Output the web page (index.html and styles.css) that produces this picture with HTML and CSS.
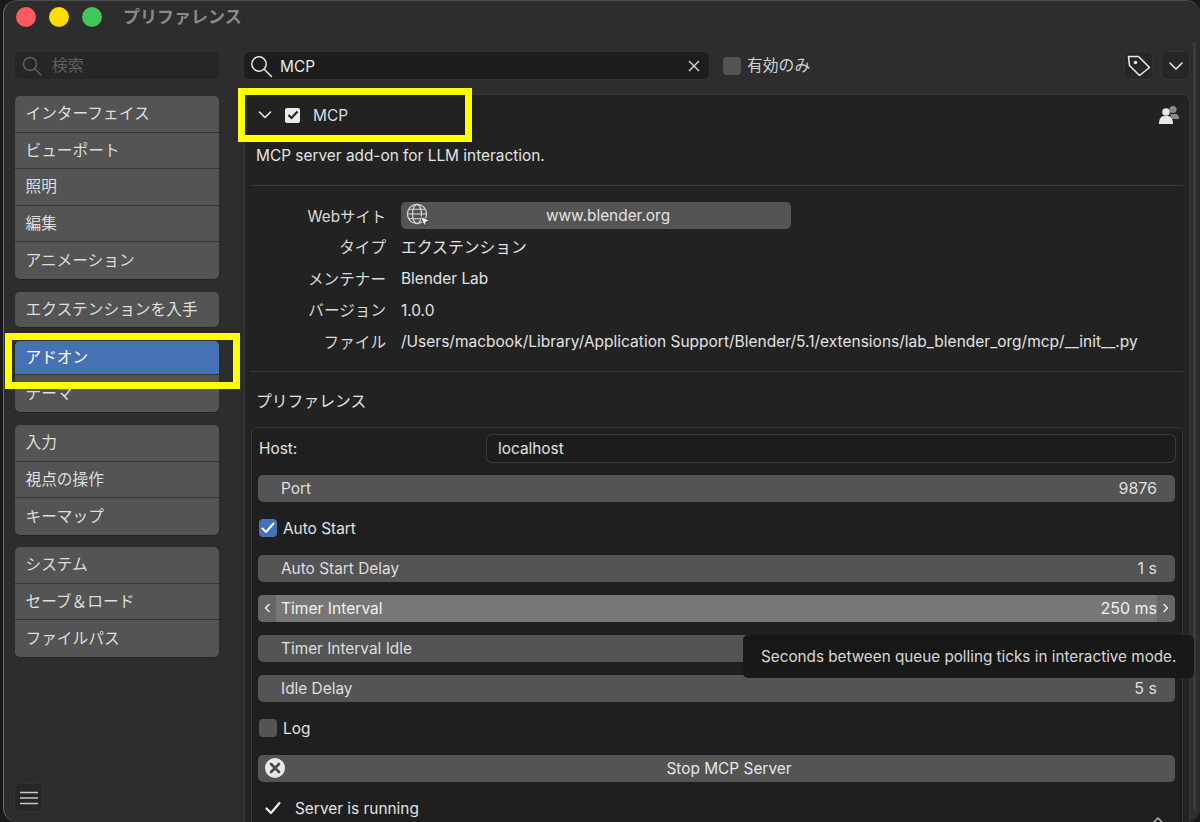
FILE: index.html
```html
<!DOCTYPE html>
<html lang="ja">
<head>
<meta charset="utf-8">
<title>プリファレンス</title>
<link rel="stylesheet" href="styles.css">
</head>
<body>
<div class="window">
  <header class="titlebar">
    <span class="light red"></span><span class="light yellow"></span><span class="light green"></span>
    <span class="title">プリファレンス</span>
  </header>
  <div class="content">
    <aside class="sidebar">
      <div class="side-search">
        <svg class="search-icon" width="22" height="22" viewBox="0 0 22 22"><circle cx="9" cy="9" r="6.5"/><path d="M13.8 13.8 20 20"/></svg>
        <span class="jp">検索</span>
      </div>
      <nav class="group first"><a>インターフェイス</a><a>ビューポート</a><a>照明</a><a>編集</a><a>アニメーション</a></nav>
      <nav class="group single"><a>エクステンションを入手</a></nav>
      <nav class="group"><a class="active">アドオン</a><a>テーマ</a></nav>
      <nav class="group"><a>入力</a><a>視点の操作</a><a>キーマップ</a></nav>
      <nav class="group last"><a>システム</a><a>セーブ＆ロード</a><a>ファイルパス</a></nav>
      <div class="side-spacer"></div>
      <div class="menu-btn"><svg width="18" height="16" viewBox="0 0 18 16"><path d="M0 2.500h18M0 8h18M0 13.500h18"/></svg></div>
    </aside>
    <main class="main">
      <div class="toolbar">
        <div class="main-search">
          <svg class="search-icon bright" width="24" height="24" viewBox="0 0 24 24"><circle cx="10" cy="10" r="7.2"/><path d="M15.2 15.2 22.5 22.5"/></svg>
          <span class="grow search-text">MCP</span>
          <svg class="clear" width="14" height="14" viewBox="0 0 14 14"><path d="M2 2l10 10M12 2 2 12"/></svg>
        </div>
        <span class="check-off small"></span>
        <span class="enabled jp">有効のみ</span>
        <span class="grow"></span>
        <div class="tool-btn"><svg width="24" height="24" viewBox="0 0 24 24"><path class="stroke" d="M1.500 2.500h10l11 11-10 8-10-10z"/><circle cx="8.500" cy="8.500" r="1.800" fill="#e6e6e6"/></svg></div>
        <div class="tool-btn"><svg width="16" height="10" viewBox="0 0 16 10"><path class="stroke" d="M2 2l6 6 6-6"/></svg></div>
      </div>
      <section class="panel">
        <div class="addon-head">
          <svg class="chev" width="14" height="10" viewBox="0 0 14 10"><path class="stroke" d="M1.500 2 7 7.500 12.500 2"/></svg>
          <span class="addon-check"><svg width="12" height="10" viewBox="0 0 12 10"><path d="M1.500 5 4.500 8 10.500 1.500"/></svg></span>
          <span class="addon-name">MCP</span>
          <span class="grow"></span>
          <svg class="users" width="22" height="22" viewBox="0 0 22 22"><circle cx="15" cy="5.500" r="3.600" fill="#8a8a8a"/><path d="M12 10h6c2 0 3 2 3 5h-7z" fill="#8a8a8a"/><circle cx="8" cy="8" r="3.800" fill="#e8e8e8"/><path d="M1 20c0-5 2-8 5-8h4c3 0 5 3 5 8z" fill="#e8e8e8"/></svg>
        </div>
        <p class="desc">MCP server add-on for LLM interaction.</p>
        <hr class="rule">
        <div class="info">
          <div class="info-row web"><label class="site">Webサイト</label>
            <div class="url"><svg width="26" height="26" viewBox="0 0 26 26"><circle cx="11" cy="11" r="9.600"/><ellipse cx="11" cy="11" rx="4.500" ry="9.600"/><path d="M1.500 11h19M2.800 6.200h16.400M2.800 15.800h16.400"/><path class="cursor" d="M14.500 13.500l9 4-3.600 1.500-1.400 4z"/></svg><span>www.blender.org</span></div>
          </div>
          <div class="info-row"><label>タイプ</label><span class="jp">エクステンション</span></div>
          <div class="info-row"><label>メンテナー</label><span>Blender Lab</span></div>
          <div class="info-row"><label>バージョン</label><span>1.0.0</span></div>
          <div class="info-row"><label>ファイル</label><span class="path">/Users/macbook/Library/Application Support/Blender/5.1/extensions/lab_blender_org/mcp/__init__.py</span></div>
        </div>
        <hr class="rule second">
        <h2 class="prefs-title">プリファレンス</h2>
        <div class="prefs">
          <div class="row host"><span class="host-label">Host:</span><div class="host-input">localhost</div></div>
          <div class="row"><div class="num"><span>Port</span><span class="val">9876</span></div></div>
          <div class="row"><span class="check-on"><svg width="14" height="12" viewBox="0 0 14 12"><path d="M1.500 6.500 5 10l7.500-8.500"/></svg></span><span class="check-label">Auto Start</span></div>
          <div class="row"><div class="num"><span>Auto Start Delay</span><span class="val">1 s</span></div></div>
          <div class="row"><div class="num hover">
            <span class="arrow left"><svg width="8" height="10" viewBox="0 0 8 10"><path class="stroke" d="M6 1.500 2.500 5 6 8.500"/></svg></span>
            <span>Timer Interval</span><span class="val">250 ms</span>
            <span class="arrow right"><svg width="8" height="10" viewBox="0 0 8 10"><path class="stroke" d="M2 1.500 5.500 5 2 8.500"/></svg></span>
          </div></div>
          <div class="row"><div class="num"><span>Timer Interval Idle</span><span></span></div></div>
          <div class="row"><div class="num"><span>Idle Delay</span><span class="val">5 s</span></div></div>
          <div class="row"><span class="check-off"></span><span class="check-label">Log</span></div>
          <div class="row"><div class="op"><svg width="20" height="20" viewBox="0 0 20 20"><circle cx="10" cy="10" r="10" fill="#e8e8e8"/><path d="M6 6l8 8M14 6l-8 8" stroke="#4a4a4a" stroke-width="2.600" stroke-linecap="round"/></svg><span>Stop MCP Server</span></div></div>
          <div class="row status"><svg width="16" height="14" viewBox="0 0 16 14"><path d="M1.500 7.500 6 12 14.500 2"/></svg><span>Server is running</span></div>
        </div>
      </section>
    </main>
    <div class="scrollbar"></div>
  </div>
</div>
<div class="mark mark-head"></div>
<div class="mark mark-nav"></div>
<div class="tooltip">Seconds between queue polling ticks in interactive mode.</div>
<svg class="collapse" width="16" height="10" viewBox="0 0 16 10"><path d="M2 8l6-6 6 6"/></svg>
</body>
</html>
```
FILE: styles.css
```css
* { box-sizing: border-box; }
html, body { margin: 0; height: 822px; overflow: hidden; background: #1a1a1a; }
body {
  position: relative;
  padding-left: 3px;
  font-family: Inter, "Noto Sans CJK JP", sans-serif;
  font-size: 15.4px;
  color: #e2e2e2;
}
svg { display: block; flex: none; }
.stroke { fill: none; stroke: #e6e6e6; stroke-width: 1.600; stroke-linecap: round; stroke-linejoin: round; }
.grow { flex: 1; }
.jp { font-size: 15.800px; padding-bottom: 2px; }

.window {
  width: 1197px;
  height: 822px;
  background: #2d2d2d;
  border-left: 1px solid #6a6a6a;
  border-top: 1px solid #4a4a4a;
  border-radius: 14px;
  display: flex;
  flex-direction: column;
  overflow: hidden;
}

.titlebar { height: 51px; flex: none; display: flex; align-items: flex-start; padding: 6px 0 0 12px; gap: 13px; }
.light { width: 20px; height: 20px; border-radius: 50%; }
.red { background: #ff5a5f; }
.yellow { background: #fedd00; }
.green { background: #3fc65c; }
.title { margin-left: 8px; font-size: 17px; font-weight: 700; line-height: 20px; color: #8a8a8a; }

.content { flex: 1; min-height: 0; display: flex; }

.sidebar { width: 240px; flex: none; padding-left: 11px; display: flex; flex-direction: column; }
.side-search {
  width: 204px; height: 27px; flex: none;
  background: #262626; border-radius: 5px;
  display: flex; align-items: center; gap: 9px; padding-left: 6px;
  color: #5f5f5f;
}
.search-icon { fill: none; stroke: #5f5f5f; stroke-width: 1.500; stroke-linecap: round; }
.search-icon.bright { stroke: #e8e8e8; }

.group {
  width: 204px; flex: none; margin-top: 13.500px;
  background: #545454; border-radius: 5px; overflow: hidden;
  box-shadow: 0 1px 0 #222;
  display: flex; flex-direction: column;
}
.group.first { margin-top: 17px; }
.group.last { margin-top: 12.500px; }
.group a {
  height: 36.500px; flex: none; padding: 0 0 2px 10.500px;
  display: flex; align-items: center;
  font-size: 15.700px; color: #dedede;
  border-bottom: 1px solid #363636;
}
.group a:last-child { border-bottom: 0; }
.group.single a { height: 35px; }
.group a.active { background: #4671b5; color: #fff; height: 34.500px; }
.side-spacer { flex: 1; }
.menu-btn {
  width: 27px; height: 27px; margin: 0 0 11px 0; flex: none;
  background: #262626; border-radius: 5px;
  box-shadow: 0 0 0 1px #333;
  display: flex; align-items: center; justify-content: center;
}
.menu-btn svg { fill: none; stroke: #c8c8c8; stroke-width: 1.300; }

.main { width: 945px; flex: none; display: flex; flex-direction: column; }
.toolbar { height: 27px; flex: none; display: flex; align-items: center; }
.main-search {
  width: 465px; height: 27px; background: #1d1d1d; border-radius: 5px;
  display: flex; align-items: center; padding: 0 8px 0 5px; gap: 7px;
  color: #e8e8e8; box-shadow: 0 0 0 0.500px #383838;
}
.search-text { padding-top: 1px; }
.clear { fill: none; stroke: #d0d0d0; stroke-width: 1.500; }
.check-off {
  width: 20px; height: 20px; flex: none; background: #545454; border-radius: 4px;
}
.check-off.small { width: 18px; height: 18px; margin-left: 14px; }
.enabled { margin-left: 6px; color: #d2d2d2; }
.tool-btn {
  width: 27px; height: 27px; margin-left: 10px; flex: none;
  background: #262626; border-radius: 5px;
  box-shadow: 0 0 0 1px #333;
  display: flex; align-items: center; justify-content: center;
}

.panel {
  flex: 1; min-height: 0; margin: 16px 0 0 1px; padding: 0 6px 0 5px;
  background: #222; border-radius: 6px 6px 0 0;
  box-shadow: 0 0 0 1px #383838;
  overflow: hidden;
}
.addon-head { height: 40px; display: flex; align-items: center; padding: 0 3px 0 8px; }
.chev { margin-right: 13px; }
.addon-check {
  width: 15px; height: 15px; background: #ececec; border-radius: 2px; margin-right: 13px;
  display: flex; align-items: center; justify-content: center;
}
.addon-check svg { fill: none; stroke: #222; stroke-width: 2.200; }
.addon-name { color: #dedede; }
.desc { margin: 0; height: 50px; padding: 11px 0 0 6px; line-height: 20px; color: #e2e2e2; }
.rule { margin: 0; border: 0; border-top: 1px solid #383838; }

.info { padding-top: 14.500px; height: 185px; }
.info-row { height: 31.500px; display: flex; align-items: center; gap: 15px; }
.info-row.web { height: 30px; margin-bottom: 1px; }
.info-row label { width: 136px; flex: none; text-align: right; color: #dadada; font-size: 15.600px; padding-bottom: 2px; }
.info-row label.site { font-size: 15.300px; }
.path { font-size: 15.500px; }
.url {
  width: 390px; height: 27px; background: #545454; border-radius: 5px;
  display: flex; align-items: center; padding-left: 5px;
}
.url svg { fill: none; stroke: #dcdcdc; stroke-width: 1.100; }
.url svg .cursor { fill: #f2f2f2; stroke: #222; stroke-width: .6; }
.url span { flex: 1; text-align: center; padding-right: 7px; }

.prefs-title { margin: 0; height: 55px; padding: 20px 0 0 6px; font-size: 15.800px; font-weight: 400; line-height: 20px; color: #e2e2e2; }
.prefs {
  width: 932px; padding: 0 7px 0 6px; height: 420px;
  background: #1f1f1f; border: 1px solid #383838; border-radius: 6px 6px 0 0;
  margin-left: 1px;
}
.row { height: 40px; display: flex; align-items: center; }
.host-label { width: 228px; margin-left: 1px; flex: none; }
.host-input {
  flex: 1; height: 27px; padding-left: 11px; line-height: 27px;
  background: #1d1d1d; border-radius: 5px; box-shadow: 0 0 0 1px #3c3c3c;
}
.num {
  flex: 1; height: 27px; background: #545454; border-radius: 5px;
  display: flex; justify-content: space-between; align-items: center;
  padding: 0 18px 0 23px; color: #dedede; position: relative;
}
.num .val { font-size: 16px; }
.num.hover { background: #777; color: #f0f0f0; font-size: 15.600px; }
.arrow {
  position: absolute; top: 0; bottom: 0; width: 18px;
  background: #666; display: flex; align-items: center; justify-content: center;
}
.arrow.left { left: 0; border-radius: 5px 0 0 5px; }
.arrow.right { right: 0; border-radius: 0 5px 5px 0; }
.check-on {
  width: 18px; height: 18px; flex: none; margin-left: 1px; background: #4671b5; border-radius: 4px;
  display: flex; align-items: center; justify-content: center;
}
.check-on svg { fill: none; stroke: #fff; stroke-width: 2; stroke-linecap: round; stroke-linejoin: round; }
.check-label { margin-left: 6px; }
.row > .check-off { width: 18px; height: 18px; margin-left: 1px; }
.op {
  flex: 1; height: 27px; background: #545454; border-radius: 5px;
  display: flex; align-items: center; padding-left: 7px; color: #e6e6e6;
}
.op span { flex: 1; text-align: center; padding-right: 2px; }
.status { padding-left: 7px; gap: 14px; }
.status svg { fill: none; stroke: #eee; stroke-width: 2.200; stroke-linecap: round; stroke-linejoin: round; }

.scrollbar { width: 3px; flex: none; margin: -10px 0 12px 4px; background: #3c3c3c; border-radius: 2px; }

.mark { position: absolute; border: 7px solid #ffff00; }
.mark-head { left: 238px; top: 88px; width: 234px; height: 54px; }
.mark-nav { left: 5px; top: 333px; width: 235px; height: 56px; }

.tooltip {
  position: absolute; left: 743px; top: 635px; width: 451px; height: 43px;
  padding-left: 18px; line-height: 44px; font-size: 15.250px;
  background: #181818; border-radius: 5px; color: #d8d8d8; white-space: nowrap;
}
.collapse { position: absolute; left: 1150px; top: 816px; fill: none; stroke: #b0b0b0; stroke-width: 1.500; }
```
